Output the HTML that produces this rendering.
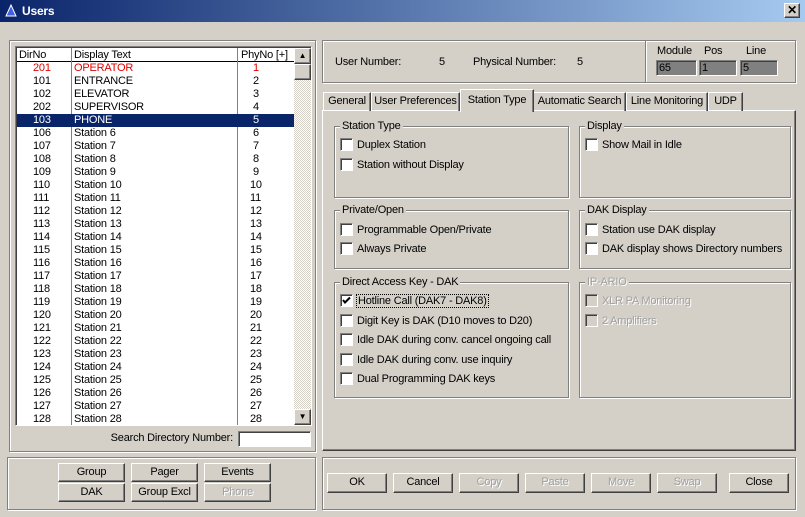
<!DOCTYPE html>
<html><head><style>
*{box-sizing:border-box;margin:0;padding:0}
body{width:805px;height:517px;background:#d4d0c8;font-family:"Liberation Sans",sans-serif;font-size:11px;letter-spacing:-0.2px;color:#000;position:relative;overflow:hidden}
.a{position:absolute;white-space:nowrap}
.title{left:0;top:0;width:805px;height:22px;background:linear-gradient(90deg,#0a246a,#a6caf0);color:#fff;font-weight:bold;font-size:12px}
.etched{border:1px solid #808080;box-shadow:1px 1px 0 #fff, inset 1px 1px 0 #fff}
.sunk{border:1px solid;border-color:#808080 #fff #fff #808080;box-shadow:inset 1px 1px 0 #404040}
.btn{background:#d4d0c8;border:1px solid;border-color:#fff #404040 #404040 #fff;box-shadow:inset -1px -1px 0 #808080;text-align:center;line-height:17px}
.dis{color:#a0a0a0;text-shadow:1px 1px 0 #fff}
.cb{width:13px;height:13px;background:#fff;border:1px solid;border-color:#808080 #fff #fff #808080;box-shadow:inset 1px 1px 0 #404040}
.gl{background:#d4d0c8;padding:0 2px;line-height:12px}
.row{position:absolute;left:0;width:277px;height:13px;line-height:13px}
.row span{position:absolute}
.tab{top:92px;height:19px;line-height:17px;text-align:center;border:1px solid;border-color:#fff #404040 transparent #fff;border-bottom:none;box-shadow:inset -1px 0 0 #808080}
</style></head><body>
<div class="a title"><svg class="a" style="left:5px;top:4px" width="12" height="13"><polygon points="6,1 11,12 1,12" fill="#4060e0" stroke="#fff" stroke-width="1"/></svg><span class="a" style="left:22px;top:4px">Users</span>
<div class="a btn" style="left:784px;top:3px;width:16px;height:15px;line-height:13px;font-size:12px;color:#000;font-weight:bold">✕</div></div>

<div class="a etched" style="left:9px;top:40px;width:307px;height:412px"></div>
<div class="a sunk" style="left:15px;top:46px;width:297px;height:380px;background:#fff;overflow:hidden">
 <div class="a" style="left:1px;top:1px;width:277px;height:14px;border-bottom:1px solid #000">
  <span class="a" style="left:2px;top:1px">DirNo</span><span class="a" style="left:57px;top:1px">Display Text</span><span class="a" style="left:224px;top:1px">PhyNo [+]</span></div>
 <div class="a" style="left:55px;top:1px;width:1px;height:380px;background:#808080"></div>
 <div class="a" style="left:221px;top:1px;width:1px;height:380px;background:#808080"></div>
 <div id="rows" class="a" style="left:1px;top:15px;width:277px"></div>
 <div class="a" style="left:278px;top:1px;width:17px;height:377px;background:repeating-conic-gradient(#fff 0 25%,#d4d0c8 0 50%) 0 0/2px 2px"></div>
 <div class="a btn" style="left:278px;top:1px;width:17px;height:16px;font-size:8px;line-height:14px">▲</div>
 <div class="a btn" style="left:278px;top:17px;width:17px;height:16px"></div>
 <div class="a btn" style="left:278px;top:362px;width:17px;height:16px;font-size:8px;line-height:14px">▼</div>
</div>
<span class="a" style="right:572px;top:432px">Search Directory Number:</span>
<div class="a sunk" style="left:238px;top:431px;width:73px;height:16px;background:#fff"></div>

<div class="a etched" style="left:7px;top:457px;width:309px;height:53px"></div>
<div class="a btn" style="left:58px;top:463px;width:67px;height:19px">Group</div>
<div class="a btn" style="left:131px;top:463px;width:67px;height:19px">Pager</div>
<div class="a btn" style="left:204px;top:463px;width:67px;height:19px">Events</div>
<div class="a btn" style="left:58px;top:483px;width:67px;height:19px">DAK</div>
<div class="a btn" style="left:131px;top:483px;width:67px;height:19px">Group Excl</div>
<div class="a btn dis" style="left:204px;top:483px;width:67px;height:19px">Phone</div>

<div class="a etched" style="left:322px;top:40px;width:474px;height:43px"></div>
<div class="a" style="left:645px;top:41px;width:1px;height:41px;background:#808080;box-shadow:1px 0 0 #fff"></div>
<span class="a" style="left:335px;top:56px">User Number:</span><span class="a" style="left:439px;top:56px">5</span>
<span class="a" style="left:473px;top:56px">Physical Number:</span><span class="a" style="left:577px;top:56px">5</span>
<span class="a" style="left:657px;top:45px">Module</span><span class="a" style="left:704px;top:45px">Pos</span><span class="a" style="left:746px;top:45px">Line</span>
<div class="a sunk" style="left:656px;top:60px;width:41px;height:16px;background:#808080;padding-left:2px;line-height:14px">65</div>
<div class="a sunk" style="left:699px;top:60px;width:38px;height:16px;background:#808080;padding-left:2px;line-height:14px">1</div>
<div class="a sunk" style="left:740px;top:60px;width:38px;height:16px;background:#808080;padding-left:2px;line-height:14px">5</div>

<div class="a" style="left:322px;top:110px;width:474px;height:341px;border:1px solid;border-color:#fff #404040 #404040 #fff;box-shadow:inset -1px -1px 0 #808080"></div>
<div class="a tab" style="left:323px;width:48px">General</div>
<div class="a tab" style="left:371px;width:89px">User Preferences</div>
<div class="a tab" style="left:533px;width:93px">Automatic Search</div>
<div class="a tab" style="left:626px;width:82px">Line Monitoring</div>
<div class="a tab" style="left:708px;width:35px">UDP</div>
<div class="a tab" style="left:460px;width:74px;top:89px;height:23px;background:#d4d0c8;padding-top:2px">Station Type</div>

<div class="a etched" style="left:334px;top:126px;width:235px;height:72px"></div>
<span class="a gl" style="left:340px;top:120px">Station Type</span>
<div class="a etched" style="left:579px;top:126px;width:212px;height:72px"></div>
<span class="a gl" style="left:585px;top:120px">Display</span>
<div class="a etched" style="left:334px;top:210px;width:235px;height:59px"></div>
<span class="a gl" style="left:340px;top:204px">Private/Open</span>
<div class="a etched" style="left:579px;top:210px;width:212px;height:59px"></div>
<span class="a gl" style="left:585px;top:204px">DAK Display</span>
<div class="a etched" style="left:334px;top:282px;width:235px;height:116px"></div>
<span class="a gl" style="left:340px;top:276px">Direct Access Key - DAK</span>
<div class="a etched" style="left:579px;top:282px;width:212px;height:116px"></div>
<span class="a gl dis" style="left:585px;top:276px">IP-ARIO</span>
<div id="cbs"></div>

<div class="a etched" style="left:322px;top:457px;width:474px;height:53px"></div>
<div class="a btn" style="left:327px;top:473px;width:60px;height:20px">OK</div>
<div class="a btn" style="left:393px;top:473px;width:60px;height:20px">Cancel</div>
<div class="a btn dis" style="left:459px;top:473px;width:60px;height:20px">Copy</div>
<div class="a btn dis" style="left:525px;top:473px;width:60px;height:20px">Paste</div>
<div class="a btn dis" style="left:591px;top:473px;width:60px;height:20px">Move</div>
<div class="a btn dis" style="left:657px;top:473px;width:60px;height:20px">Swap</div>
<div class="a btn" style="left:729px;top:473px;width:60px;height:20px">Close</div>

<script>
var d=[["201","OPERATOR"],["101","ENTRANCE"],["102","ELEVATOR"],["202","SUPERVISOR"],["103","PHONE"]];
for(var i=106;i<=128;i++)d.push([""+i,"Station "+(i-100)]);
var h="";
d.forEach(function(r,k){var st=k==0?"color:#e00000":k==4?"background:#0a246a;color:#fff":"";
h+='<div class="row" style="top:'+(k*13)+'px;'+st+'"><span style="left:16px">'+r[0]+'</span><span style="left:57px">'+r[1]+'</span><span style="left:'+(k<9?236:233)+'px">'+(k+1)+'</span></div>';});
document.getElementById("rows").innerHTML=h;
var c=[[340,145,"Duplex Station"],[340,165,"Station without Display"],[585,145,"Show Mail in Idle"],
[340,230,"Programmable Open/Private"],[340,249,"Always Private"],[585,230,"Station use DAK display"],[585,249,"DAK display shows Directory numbers"],
[340,301,"Hotline Call (DAK7 - DAK8)",1],[340,321,"Digit Key is DAK (D10 moves to D20)"],[340,340,"Idle DAK during conv. cancel ongoing call"],[340,360,"Idle DAK during conv. use inquiry"],[340,379,"Dual Programming DAK keys"],
[585,301,"XLR PA Monitoring",2],[585,321,"2 Amplifiers",2]];
h="";
c.forEach(function(e){h+='<div class="a cb" style="left:'+e[0]+'px;top:'+(e[1]-7)+'px;'+(e[3]==2?'background:#d4d0c8':'')+'">'+(e[3]==1?'<svg width="11" height="11" style="position:absolute;left:0;top:0"><path d="M2 5 L4 7.5 L9 2.5" stroke="#000" stroke-width="2" fill="none"/></svg>':'')+'</div><span class="a'+(e[3]==2?' dis':'')+'" style="left:'+(e[0]+17)+'px;top:'+(e[1]-6)+'px;'+(e[3]==1?'outline:1px dotted #000;padding:0 1px':'')+'">'+e[2]+'</span>';});
document.getElementById("cbs").innerHTML=h;
</script>
</body></html>
